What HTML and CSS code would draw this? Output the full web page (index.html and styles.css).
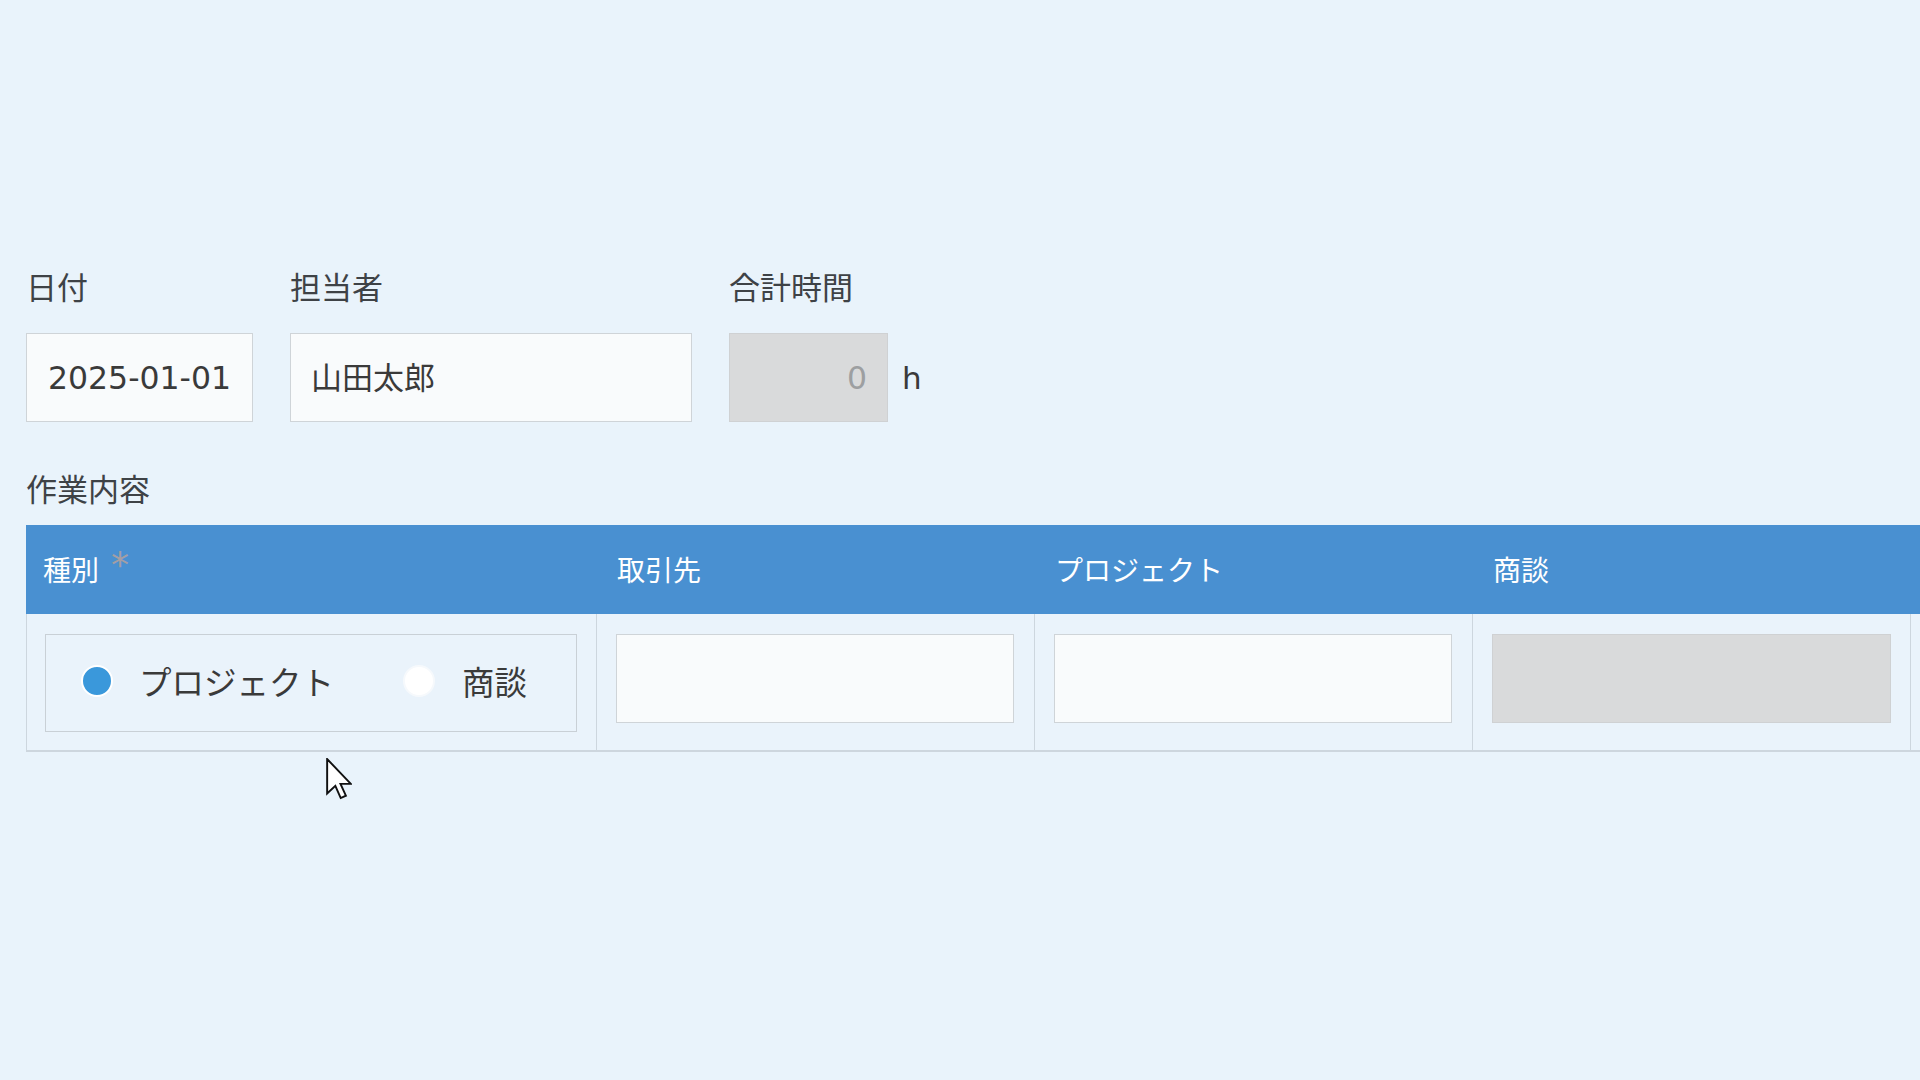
FILE: index.html
```html
<!DOCTYPE html>
<html lang="ja">
<head>
<meta charset="utf-8">
<title>作業内容</title>
<link rel="stylesheet" href="styles.css">
</head>
<body>
<div class="page">
  <div class="form-row">
    <div class="field">
      <div class="label">日付</div>
      <div class="input input-date">2025-01-01</div>
    </div>
    <div class="field">
      <div class="label">担当者</div>
      <div class="input input-user">山田太郎</div>
    </div>
    <div class="field">
      <div class="label">合計時間</div>
      <div class="calc-row">
        <div class="input input-calc">0</div>
        <span class="unit">h</span>
      </div>
    </div>
  </div>

  <div class="label section-label">作業内容</div>

  <div class="subtable">
    <div class="th th-first">種別<span class="req">*</span></div>
    <div class="th">取引先</div>
    <div class="th">プロジェクト</div>
    <div class="th">商談</div>
    <div class="th"></div>

    <div class="td td-first">
      <div class="radio-box">
        <div class="radio-item">
          <span class="radio radio-on"></span>
          <span class="radio-text">プロジェクト</span>
        </div>
        <div class="radio-item radio-item-2">
          <span class="radio radio-off"></span>
          <span class="radio-text">商談</span>
        </div>
      </div>
    </div>
    <div class="td"><div class="cell-input"></div></div>
    <div class="td"><div class="cell-input"></div></div>
    <div class="td"><div class="cell-input cell-input-disabled"></div></div>
    <div class="td"></div>
  </div>
</div>

<svg class="cursor" width="26" height="42" viewBox="0 0 12 19.5" xmlns="http://www.w3.org/2000/svg">
  <path d="M0.5 0.5 L0.5 16.5 L4.3 12.9 L6.8 18.6 L9.2 17.5 L6.7 12 L11.5 12 Z" fill="#ffffff" stroke="#111111" stroke-width="0.9" stroke-linejoin="miter"/>
</svg>
</body>
</html>
```

FILE: styles.css
```css
html, body {
  margin: 0;
  padding: 0;
  width: 1920px;
  height: 1080px;
  overflow: hidden;
  background: #e9f3fb;
}

body {
  font-family: "DejaVu Sans", "Noto Sans CJK JP", sans-serif;
  color: #3b3b3b;
  position: relative;
}

.page {
  padding: 266px 0 0 26px;
}

.form-row {
  display: flex;
  gap: 37px;
}

.field {
  display: flex;
  flex-direction: column;
}

.label {
  font-family: "Noto Sans CJK JP", sans-serif;
  font-size: 31px;
  line-height: 40px;
  height: 40px;
  color: #3e4246;
  white-space: nowrap;
}

.field .label {
  margin-bottom: 27px;
}

.input {
  box-sizing: border-box;
  height: 89px;
  border: 1px solid #cfd4d8;
  background: #f9fbfc;
  display: flex;
  align-items: center;
  font-size: 31.5px;
  color: #3a3a3a;
  white-space: nowrap;
}

.input-date {
  width: 227px;
  padding-left: 21px;
}

.input-user {
  width: 402px;
  padding-left: 20px;
  padding-bottom: 4px;
  font-family: "Noto Sans CJK JP", sans-serif;
  font-size: 31px;
}

.calc-row {
  display: flex;
  align-items: center;
  gap: 14px;
}

.input-calc {
  width: 159px;
  justify-content: flex-end;
  padding-right: 20px;
  background: #d9dadb;
  border-color: #cfd1d3;
  color: #9d9fa1;
}

.unit {
  font-size: 31px;
  color: #3a3a3a;
}

.section-label {
  margin-top: 46px;
  margin-bottom: 17px;
}

.subtable {
  display: grid;
  grid-template-columns: 571px 438px 438px 438px 300px;
  width: max-content;
}

.th {
  box-sizing: border-box;
  height: 89px;
  background: #4990d1;
  color: #ffffff;
  font-family: "Noto Sans CJK JP", sans-serif;
  font-size: 28px;
  display: flex;
  align-items: center;
  padding-left: 20px;
  padding-bottom: 2px;
  white-space: nowrap;
}

.th-first {
  padding-left: 17px;
}

.req {
  font-family: "DejaVu Sans", sans-serif;
  font-size: 36px;
  line-height: 36px;
  color: #a39ea5;
  margin-left: 12px;
  align-self: flex-start;
  margin-top: 22px;
}

.td {
  box-sizing: border-box;
  border-right: 1px solid #cdd6de;
  border-bottom: 2px solid #cdd6de;
  padding: 20px 19px 18px 19px;
  background: #eaf3fb;
}

.td-first {
  border-left: 1px solid #cdd6de;
  padding-left: 18px;
}

.radio-box {
  box-sizing: border-box;
  height: 98px;
  border: 1px solid #c9d0d6;
  display: flex;
  align-items: center;
  padding-left: 35px;
  padding-bottom: 5px;
}

.radio-item {
  display: flex;
  align-items: center;
  gap: 26px;
}

.radio-item-2 {
  margin-left: 69px;
  gap: 27px;
}

.radio {
  box-sizing: border-box;
  width: 32px;
  height: 32px;
  border-radius: 50%;
  border: 2px solid #ffffff;
}

.radio-on {
  background: #3a98db;
}

.radio-off {
  background: #ffffff;
  border-color: #f6f9fc;
}

.radio-text {
  font-family: "Noto Sans CJK JP", sans-serif;
  font-size: 32.5px;
  color: #3a3a3a;
  white-space: nowrap;
}

.cell-input {
  box-sizing: border-box;
  width: 398px;
  height: 89px;
  border: 1px solid #cfd4d8;
  background: #f9fbfc;
}

.cell-input-disabled {
  width: 399px;
  background: #d9dadb;
  border-color: #cfd1d3;
}

.cursor {
  position: absolute;
  left: 326px;
  top: 758px;
}
```
